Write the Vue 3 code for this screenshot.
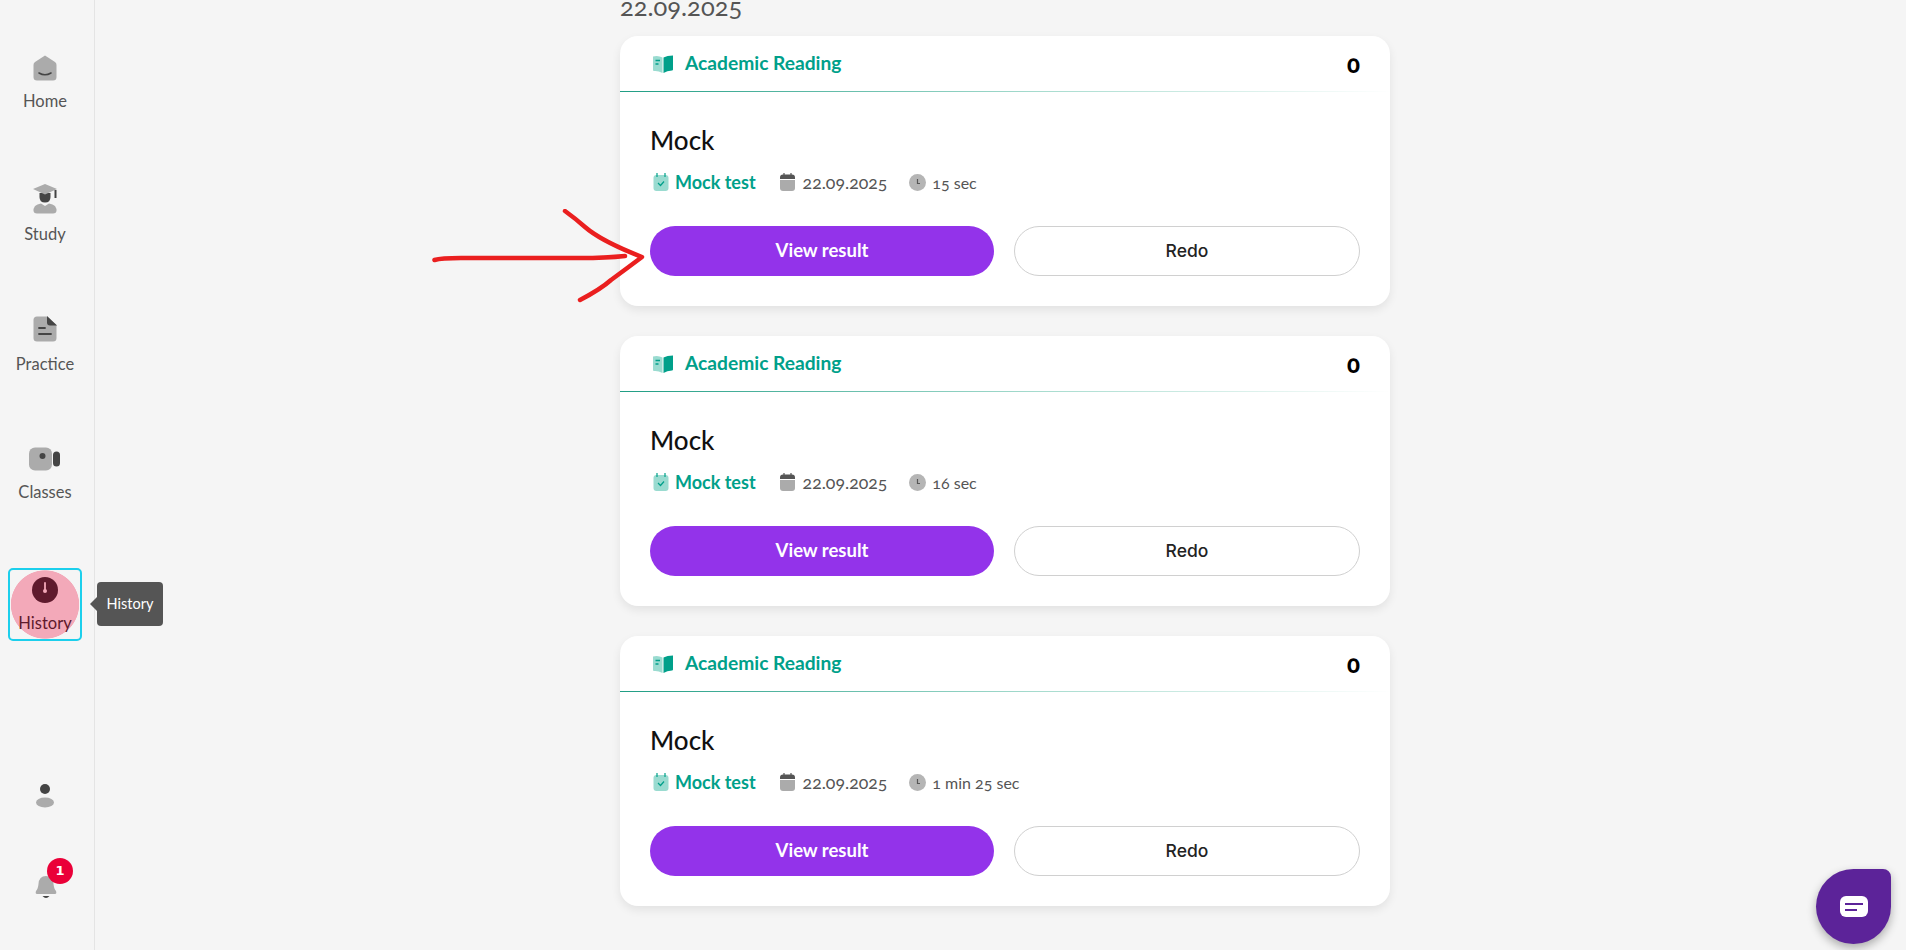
<script setup>
const navItems = [
  { label: 'Home', icon: 'home', cls: 'nav-home' },
  { label: 'Study', icon: 'study', cls: 'nav-study' },
  { label: 'Practice', icon: 'practice', cls: 'nav-practice' },
  { label: 'Classes', icon: 'classes', cls: 'nav-classes' },
  { label: 'History', icon: 'history', cls: 'nav-history' }
]

const groups = [
  {
    date: '22.09.2025',
    attempts: [
      { id: 1, title: 'Mock', section: 'Academic Reading', score: 0, type: 'Mock test', date: '22.09.2025', time: '15 sec' },
      { id: 2, title: 'Mock', section: 'Academic Reading', score: 0, type: 'Mock test', date: '22.09.2025', time: '16 sec' },
      { id: 3, title: 'Mock', section: 'Academic Reading', score: 0, type: 'Mock test', date: '22.09.2025', time: '1 min 25 sec' }
    ]
  },
  { date: '21.09.2025', attempts: [] }
]
</script>

<template>
  <div class="app">
    <aside class="sidebar">
      <nav class="nav">
        <a v-for="item in navItems" :key="item.label" class="nav-item" :class="item.cls">
          <svg v-if="item.icon === 'home'" class="nav-icon" width="24" height="26" viewBox="0 0 24 26">
            <path d="M12 0.5 L22 7 Q23.5 8 23.5 10 V22 Q23.5 25.5 20 25.5 H4 Q0.5 25.5 0.5 22 V10 Q0.5 8 2 7 Z" fill="#ababab" />
            <path d="M6 18 Q12 21.5 18 18" fill="none" stroke="#444" stroke-width="1.6" stroke-linecap="round" />
          </svg>
          <svg v-else-if="item.icon === 'study'" class="nav-icon" width="26" height="30" viewBox="0 0 26 30">
            <path d="M3 22 Q5 20 9 19.5 L13 22 L17 19.5 Q21 20 23 22 Q25 25 24.5 27 Q24 29.500 21 29.500 H5 Q2 29.500 1.500 27 Q1 25 3 22 Z" fill="#ababab" />
            <path d="M7.500 9 H18.500 V13 Q18.500 18.500 13 18.500 Q7.500 18.500 7.500 13 Z" fill="#444" />
            <path d="M13 0 L25 5 L13 10.500 L1 5 Z" fill="#ababab" />
            <rect x="22.500" y="6" width="2" height="8" fill="#444" />
          </svg>
          <svg v-else-if="item.icon === 'practice'" class="nav-icon" width="24" height="26" viewBox="0 0 24 26">
            <path d="M4 0.500 H14 L23.500 9 V22 Q23.500 25.500 20 25.500 H4 Q0.500 25.500 0.500 22 V4 Q0.500 0.500 4 0.500 Z" fill="#ababab" />
            <path d="M14 0 L24 9.500 H17 Q14 9.500 14 6.500 Z" fill="#444" />
            <path d="M6 12 H12 M6 18 H18" stroke="#444" stroke-width="1.800" stroke-linecap="round" />
          </svg>
          <svg v-else-if="item.icon === 'classes'" class="nav-icon" width="31" height="24" viewBox="0 0 31 24">
            <rect x="0" y="0.500" width="23" height="23" rx="6" fill="#ababab" />
            <circle cx="13.500" cy="9" r="3" fill="#444" />
            <rect x="24" y="4.500" width="7" height="15" rx="3.500" fill="#444" />
          </svg>
          <svg v-else class="nav-icon" width="26" height="26" viewBox="0 0 26 26">
            <circle cx="13" cy="13" r="13" fill="#5f1a2d" />
            <path d="M13 6 V13" stroke="#f3a9b9" stroke-width="1.800" stroke-linecap="round" />
            <circle cx="13" cy="14" r="2" fill="#f3a9b9" />
          </svg>
          <span class="nav-label">{{ item.label }}</span>
          <span v-if="item.icon === 'history'" class="tooltip">History</span>
        </a>
      </nav>

      <div class="nav-bottom">
        <svg class="profile" width="18" height="24" viewBox="0 0 18 24">
          <circle cx="9" cy="5" r="5" fill="#444" />
          <ellipse cx="9" cy="18.500" rx="9" ry="5" fill="#ababab" />
        </svg>
        <div class="bell">
          <svg width="22" height="24" viewBox="0 0 22 24">
            <path d="M11 0 Q18 0 18.500 8 Q19 13 21 15 Q22 18 20 18 H2 Q0 18 1 15 Q3 13 3.500 8 Q4 0 11 0 Z" fill="#ababab" />
            <path d="M7.500 20 H14.500 Q11 24 7.500 20 Z" fill="#444" />
          </svg>
          <span class="badge">1</span>
        </div>
      </div>
    </aside>

    <main class="main">
      <section v-for="group in groups" :key="group.date" class="group">
        <h2 class="group-date">{{ group.date }}</h2>
        <article v-for="a in group.attempts" :key="a.id" class="card">
          <header class="card-head">
            <div class="section">
              <svg width="20" height="18" viewBox="0 0 20 18">
                <path d="M0 1.500 Q5 0 9.500 2.500 V18 Q5 15.500 1 16 Q0 16 0 15 Z" fill="#9adbd0" />
                <path d="M20 0.500 V14.500 Q20 15.500 19 15.500 Q14 15.500 10.500 18 V2.500 Q14 0.500 20 0.500 Z" fill="#00a08a" />
                <path d="M2.500 5.500 H7 M2.500 9 H5.500" stroke="#00a08a" stroke-width="1.300" />
              </svg>
              <span class="section-name">{{ a.section }}</span>
            </div>
            <span class="score">{{ a.score }}</span>
          </header>
          <div class="card-body">
            <h3 class="title">{{ a.title }}</h3>
            <div class="meta">
              <svg class="meta-type-icon" width="16" height="18" viewBox="0 0 16 18">
                <rect x="0.500" y="2" width="15" height="16" rx="3" fill="#9adbd0" />
                <path d="M4 0 V4 M12 0 V4" stroke="#00a08a" stroke-width="1.200" />
                <path d="M5 10 L7.500 12.500 L11 8.500" fill="none" stroke="#00a08a" stroke-width="1.200" />
              </svg>
              <span class="meta-type">{{ a.type }}</span>
              <svg class="meta-date-icon" width="15" height="18" viewBox="0 0 15 18">
                <path d="M0 7 H15 V15 Q15 18 12 18 H3 Q0 18 0 15 Z" fill="#ababab" />
                <path d="M3 1.500 H12 Q15 1.500 15 4.500 V6 H0 V4.500 Q0 1.500 3 1.500 Z" fill="#555" />
                <path d="M4 0 V2 M11 0 V2" stroke="#555" stroke-width="1.200" />
              </svg>
              <span class="meta-date">{{ a.date }}</span>
              <svg class="meta-time-icon" width="17" height="17" viewBox="0 0 17 17">
                <circle cx="8.500" cy="8.500" r="8.500" fill="#b5b5b5" />
                <path d="M8.500 5 V9.500 H11" fill="none" stroke="#555" stroke-width="1.200" />
              </svg>
              <span class="meta-time">{{ a.time }}</span>
            </div>
            <div class="actions">
              <button class="btn primary">View result</button>
              <button class="btn outline">Redo</button>
            </div>
          </div>
        </article>
      </section>
    </main>

    <!-- hand drawn annotation on top of the screenshot -->
    <svg class="arrow" width="220" height="100" viewBox="0 0 220 100">
      <path d="M3.500 51 Q10 49 30 49 L150 49 Q175 49 194 47" fill="none" stroke="#ea1f1f" stroke-width="4.500" stroke-linecap="round" />
      <path d="M134 2 Q145 10 154 18 Q170 32 211 48 Q195 60 180 71 Q170 80 149 91" fill="none" stroke="#ea1f1f" stroke-width="4.500" stroke-linecap="round" stroke-linejoin="round" />
    </svg>

    <button class="chat">
      <svg width="28" height="22" viewBox="0 0 28 22">
        <rect x="0" y="0" width="28" height="21" rx="6" fill="#fff" />
        <path d="M5 8 H23 M5 14 H17" stroke="#5c2399" stroke-width="2" />
      </svg>
    </button>
  </div>
</template>

<style>
html, body {
  margin: 0;
  height: 100%;
  overflow: hidden;
  background: #f5f5f5;
}
</style>

<style scoped>
.app {
  display: flex;
  height: 950px;
  overflow: hidden;
  position: relative;
  background: #f5f5f5;
  font-family: Lato, "Open Sans", "Liberation Sans", sans-serif;
  color: #555;
}

.sidebar {
  width: 95px;
  flex-shrink: 0;
  height: 950px;
  padding-right: 4px;
  border-right: 1px solid #e4e4e4;
  box-sizing: border-box;
  display: flex;
  flex-direction: column;
  justify-content: space-between;
  align-items: center;
}

.nav {
  display: flex;
  flex-direction: column;
  align-items: center;
  width: 100%;
}

.nav-item {
  position: relative;
  display: flex;
  flex-direction: column;
  align-items: center;
  color: #555;
  font-size: 16.500px;
  line-height: 20px;
}

.nav-home { margin-top: 55px; }
.nav-study { margin-top: 73px; }
.nav-practice { margin-top: 72px; }
.nav-classes { margin-top: 73px; }
.nav-history {
  margin-top: 66px;
  width: 74px;
  height: 73px;
  box-sizing: border-box;
  padding-top: 7px;
  border: 2px solid #1ccfec;
  border-radius: 5px;
  color: #5f1a2d;
  background: radial-gradient(circle 34.500px at 50% 50%, #f3a9b9 98%, transparent 100%);
}

.nav-home .nav-icon { margin-bottom: 10px; }
.nav-study .nav-icon { margin-bottom: 10px; }
.nav-practice .nav-icon { margin-bottom: 12px; }
.nav-classes .nav-icon { margin-bottom: 11px; }
.nav-history .nav-icon { margin-bottom: 10px; }

.tooltip {
  position: absolute;
  left: 87px;
  top: 12px;
  width: 66px;
  height: 44px;
  line-height: 44px;
  text-align: center;
  background: #555;
  color: #fff;
  border-radius: 4px;
  font-size: 14.500px;
}

.tooltip::before {
  content: "";
  position: absolute;
  left: -7px;
  top: 15px;
  border-style: solid;
  border-width: 7px 7px 7px 0;
  border-color: transparent #555 transparent transparent;
}

.nav-bottom {
  display: flex;
  flex-direction: column;
  align-items: center;
  gap: 68px;
  padding-bottom: 50px;
}

.profile {
  display: block;
}

.bell {
  position: relative;
  height: 24px;
  margin-left: 2px;
}

.badge {
  position: absolute;
  left: 12px;
  top: -18px;
  width: 26px;
  height: 26px;
  line-height: 26px;
  border-radius: 50%;
  background: #ea0038;
  color: #fff;
  font-family: "DejaVu Sans", sans-serif;
  font-weight: 700;
  font-size: 13px;
  text-align: center;
}

.main {
  margin-left: 525px;
  margin-top: -8px;
  width: 770px;
  flex-shrink: 0;
}

.group {
  margin-bottom: 34px;
}

.group-date {
  margin: 0 0 12px;
  height: 32px;
  font-size: 25.500px;
  line-height: 28px;
  font-weight: 400;
  color: #555;
  font-variant-numeric: oldstyle-nums;
}

.card {
  background: #fff;
  border-radius: 18px;
  box-shadow: 0 4px 10px rgba(0, 0, 0, 0.08);
  margin-bottom: 30px;
  height: 270px;
}

.card:last-child {
  margin-bottom: 0;
}

.card-head {
  height: 56px;
  box-sizing: border-box;
  padding: 0 30px 0 33px;
  display: flex;
  justify-content: space-between;
  align-items: center;
  border-bottom: 1px solid;
  border-image: linear-gradient(90deg, #1f9d84, #a8dccf 55%, #ffffff) 1;
}

.section {
  display: flex;
  align-items: center;
  gap: 12px;
}

.section-name {
  margin-top: -3px;
  color: #00a08a;
  font-size: 19.200px;
  font-weight: 700;
}

.score {
  color: #000;
  font-weight: 900;
  font-size: 24px;
  font-variant-numeric: oldstyle-nums;
}

.card-body {
  padding: 34px 30px 30px;
}

.title {
  margin: 0 0 15px;
  height: 29px;
  line-height: 29px;
  font-size: 26px;
  font-weight: 500;
  color: #111;
}

.meta {
  display: flex;
  align-items: center;
  height: 24px;
  padding-left: 3px;
}

.meta-type {
  margin-left: 6px;
  color: #00a08a;
  font-weight: 700;
  font-size: 18px;
}

.meta-date-icon {
  margin-left: 24px;
}

.meta-date {
  margin-left: 8px;
  font-size: 17.700px;
  font-variant-numeric: oldstyle-nums;
}

.meta-time-icon {
  margin-left: 22px;
}

.meta-time {
  margin-left: 6px;
  font-size: 16px;
  font-variant-numeric: oldstyle-nums;
}

.actions {
  display: flex;
  gap: 20px;
  margin-top: 32px;
}

.btn {
  flex: 1;
  height: 50px;
  padding: 0 0 2px;
  border-radius: 25px;
  font-family: inherit;
  font-size: 18.500px;
  cursor: pointer;
}

.btn.primary {
  background: #9333ea;
  border: none;
  color: #fff;
  font-weight: 700;
}

.btn.outline {
  background: #fff;
  border: 1px solid #d0d0d0;
  color: #222;
  font-family: Inter, sans-serif;
  font-size: 17.500px;
  font-weight: 500;
}

.arrow {
  position: absolute;
  left: 431px;
  top: 209px;
}

.chat {
  position: absolute;
  left: 1816px;
  top: 869px;
  width: 75px;
  height: 75px;
  padding: 0;
  border: none;
  border-radius: 50% 8px 50% 50%;
  background: #5c2399;
  box-shadow: 0 4px 10px rgba(0, 0, 0, 0.3);
  display: flex;
  align-items: center;
  justify-content: center;
}
</style>
